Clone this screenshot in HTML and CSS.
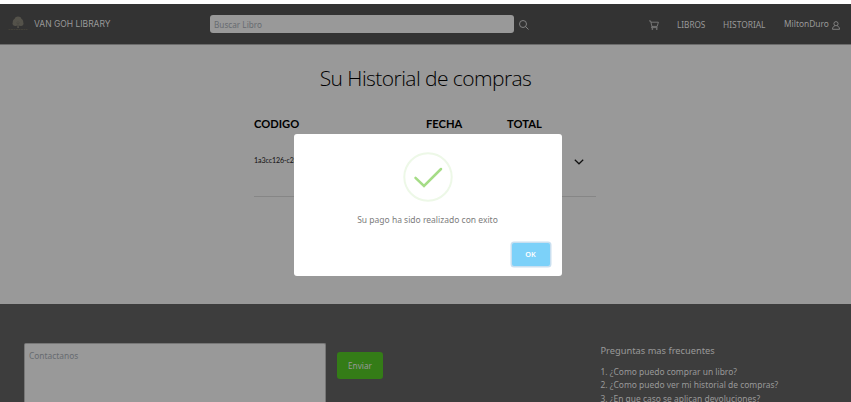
FILE: index.html
```html
<!DOCTYPE html>
<html lang="es">
<head>
<meta charset="utf-8">
<title>Van Goh Library</title>
<link rel="stylesheet" href="styles.css">
</head>
<body>
<header class="navbar">
  <a class="brand">
    <svg class="logo" viewBox="0 0 20 16"><path d="M10 0.5c-2 0-3 1-3.300 2.200C5.200 3.500 4.600 4.800 4.800 6.200 4 7.500 4.600 9.300 6.200 9.700c1.200.6 2.400.4 3.300-.1L9.200 12h1.800l-.4-2.400c1 .5 2.300.6 3.400.1 1.500-.5 2-2.200 1.200-3.500.2-1.500-.4-2.800-1.800-3.500C13 1.300 12 .5 10 .5z" fill="#54524a"/><path d="M10 5v5M10 8L8 6.500M10 8l2-1.500" stroke="#474640" stroke-width=".6"/><path d="M.5 13.500h19" stroke="#424039" stroke-width="1" stroke-dasharray="2 .5"/></svg>
    <span class="brand-name">VAN GOH LIBRARY</span>
  </a>
  <form class="search">
    <div class="search-input">Buscar Libro</div>
    <svg class="search-icon" viewBox="0 0 10 10"><circle cx="4" cy="4" r="3.500"/><path d="M6.500 6.500L9.500 9.500"/></svg>
  </form>
  <nav class="links">
    <svg class="cart" viewBox="0 0 10 10"><path d="M0 .9h1.600l1.300 5.500h5.300L9.400 2.200H2M2.900 6.400l-.4 1.200h6"/><circle cx="3.300" cy="9" r=".5"/><circle cx="7.800" cy="9" r=".5"/></svg>
    <a class="link-books">LIBROS</a>
    <a class="link-history">HISTORIAL</a>
    <a class="link-user">MiltonDuro</a>
    <svg class="user" viewBox="0 0 8 9"><circle cx="4" cy="2.700" r="2.100"/><path d="M2.800 4.800C1.500 5.300.6 6.300.5 8.300h7c-.1-2-1-3-2.300-3.500"/></svg>
  </nav>
</header>
<main class="history">
  <h1 class="title">Su Historial de compras</h1>
  <section class="orders">
    <div class="row head"><span>CODIGO</span><span>FECHA</span><span>TOTAL</span></div>
    <div class="row order">
      <span class="code">1a3cc126-c24</span>
      <svg class="chevron" viewBox="0 0 10 6"><path d="M.8.8L5 4.800 9.200.8"/></svg>
    </div>
  </section>
</main>
<footer class="footer">
  <div class="message">Contactanos</div>
  <button class="send">Enviar</button>
  <section class="faq">
    <h2>Preguntas mas frecuentes</h2>
    <p>1. ¿Como puedo comprar un libro?</p>
    <p>2. ¿Como puedo ver mi historial de compras?</p>
    <p>3. ¿En que caso se aplican devoluciones?</p>
  </section>
</footer>
<div class="modal" role="dialog">
  <svg class="success" viewBox="0 0 50 50"><circle cx="25" cy="25" r="23.700"/><path d="M12.500 25.800L21 34 38 17"/></svg>
  <p class="modal-text">Su pago ha sido realizado con exito</p>
  <button class="ok">OK</button>
</div>
</body>
</html>
```
FILE: styles.css
```css
* { box-sizing: border-box; }
body {
  margin: 0;
  padding-top: 4px;
  height: 402px;
  overflow: hidden;
  display: flex;
  flex-direction: column;
  background: #fff;
  font-family: "Noto Sans", sans-serif;
  font-size: 8px;
  color: #999;
}
h1, h2, p { margin: 0; font-weight: 400; }
span, a, p, h1, h2 { white-space: nowrap; }
svg { display: block; fill: none; flex: none; }
button { border: 0; padding: 0; font-family: inherit; }

.navbar {
  flex: none;
  height: 41px;
  display: flex;
  align-items: center;
  background: #333;
  border-bottom: 1px solid #6c6c6c;
}
.brand { display: flex; align-items: center; width: 210px; padding-left: 8px; }
.logo { width: 20px; height: 16px; }
.brand-name { margin: -1px 0 0 6px; font: 400 8.500px/12px Inter, sans-serif; }
.search { display: flex; align-items: center; width: 438px; }
.search-input {
  width: 304px;
  height: 18px;
  padding-left: 4px;
  border-radius: 3px;
  background: #999;
  color: #676b70;
  font-size: 8.200px;
  line-height: 19px;
}
.search-icon { width: 10px; height: 10px; margin: 1px 0 0 5px; stroke: #8a8a8a; stroke-width: .9; }
.links { display: flex; align-items: center; flex: 1; line-height: 12px; padding-top: 1px; font-size: 8.400px; }
.cart { width: 10px; height: 10px; margin-left: 1px; stroke: #929292; stroke-width: .7; }
.link-books { width: 46px; margin-left: 18px; font-size: 8.200px; }
.link-history { width: 61px; }
.link-user { width: 47px; margin-top: -1px; }
.user { width: 8px; height: 9px; margin: 1px 0 0 1px; stroke: #929292; stroke-width: .8; }

.history { flex: none; height: 259px; background: #999; color: #000; }
.title {
  padding-top: 18px;
  text-align: center;
  font: 300 21px/30px "Open Sans", sans-serif;
  letter-spacing: -.56px;
}
.orders { width: 342px; margin: 23px 0 0 254px; }
.row { display: grid; grid-template-columns: 172px 81px 1fr; }
.head { font: 700 11.200px/16px Lato, sans-serif; }
.order {
  height: 65px;
  align-items: center;
  grid-template-columns: 320px 10px;
  border-bottom: 1px solid #868686;
}
.code { margin-top: -7px; font: 400 7.100px/10px Lato, sans-serif; letter-spacing: -.1px; color: #111; }
.chevron { width: 10px; height: 6px; margin-top: -4px; stroke: #111; stroke-width: 1.200; }

.footer { flex: 1; min-height: 0; display: flex; padding-left: 24px; background: #3d3d3d; }
.message {
  width: 302px;
  height: 59px;
  margin-top: 39px;
  padding: 6px 4px;
  border: 1px solid #777;
  border-bottom: 0;
  border-radius: 2px 2px 0 0;
  background: #999;
  color: #676b70;
  font-size: 8.400px;
  line-height: 12px;
}
.send {
  width: 46px;
  height: 27px;
  margin: 48px 0 0 11px;
  border-radius: 3px;
  background: #347c17;
  color: #999;
  font-size: 8.200px;
}
.faq { height: 59px; margin: 39px 0 0 217.500px; line-height: 13.300px; font-size: 8.450px; }
.faq h2 { font-size: 9.300px; line-height: 15px; margin-bottom: 7px; }

.modal {
  position: absolute;
  left: 293.500px;
  top: 134px;
  width: 268px;
  height: 142px;
  display: flex;
  flex-direction: column;
  align-items: center;
  padding: 18px 12px 0;
  border-radius: 3px;
  background: #fff;
}
.success { width: 50px; height: 50px; stroke: #a5dc86; stroke-width: 2.500; stroke-linecap: round; }
.success circle { stroke: #edf8e7; stroke-width: 2; }
.modal-text { margin-top: 12px; font-size: 8.500px; line-height: 12px; color: #7c7c7c; }
.ok {
  align-self: flex-end;
  width: 38px;
  height: 23px;
  margin-top: 17px;
  padding-bottom: 1px;
  border-radius: 2px;
  background: #7cd1f9;
  box-shadow: 0 0 0 1.500px #c9dff0;
  color: #fff;
  font-weight: 600;
  font-size: 7.300px;
}
```
